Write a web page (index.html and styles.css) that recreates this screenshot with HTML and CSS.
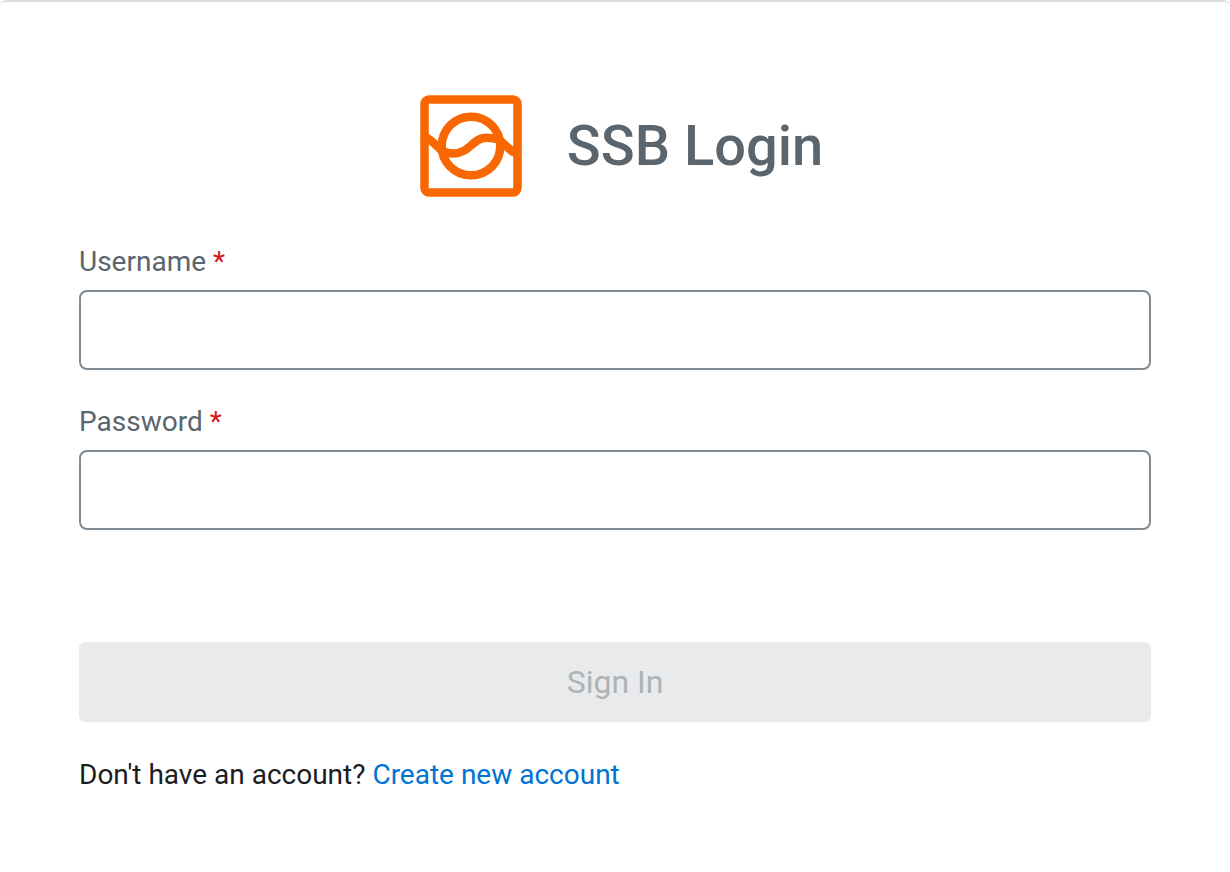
FILE: index.html
```html
<!DOCTYPE html>
<html lang="en">
<head>
  <meta charset="UTF-8">
  <meta name="viewport" content="width=device-width, initial-scale=1.0">
  <title>SSB Login</title>
  <link rel="stylesheet" href="styles.css">
</head>
<body>
  <main class="login-card">
    <header class="login-header">
      <svg class="logo" viewBox="0 0 102 102" fill="none" stroke="#f96702" stroke-width="8.5" aria-hidden="true">
        <rect x="4.5" y="4.5" width="93" height="93" rx="4.5"/>
        <circle cx="51" cy="51" r="29.3"/>
        <path d="M6 42.5C11 44 17 52 23 56.5C34 61 43 58 51 50.5C60 42 66 41 79 44.5L91 55.5Q93 57 96 58"/>
      </svg>
      <h1 class="title">SSB Login</h1>
    </header>

    <form class="login-form">
      <label class="field-label" for="username">Username <span class="required">*</span></label>
      <input class="field-input" type="text" id="username" name="username" required>

      <label class="field-label" for="password">Password <span class="required">*</span></label>
      <input class="field-input" type="password" id="password" name="password" required>

      <button class="submit" type="submit" disabled>Sign In</button>
    </form>

    <p class="signup">Don't have an account? <a href="#register">Create new account</a></p>
  </main>
</body>
</html>
```

FILE: styles.css
```css
* {
  box-sizing: border-box;
}
body {
  margin: 0;
  background: #fff;
  color: #1b1d1f;
  font-family: Roboto, "Liberation Sans", sans-serif;
  font-size: 28px;
  line-height: 40px;
}
.login-card {
  min-height: 100vh;
  padding: 93px 79px 76px;
  border-top: 2px solid #dedede;
  border-radius: 6px;
}

.login-header {
  display: flex;
  align-items: center;
  justify-content: center;
  gap: 45px;
  padding-left: 13px;
  margin-bottom: 45px;
}
.logo {
  width: 102px;
  height: 102px;
}
.title {
  margin: 0;
  color: #5a656d;
  font-size: 56px;
  font-weight: 500;
  line-height: 64px;
}

.login-form {
  display: flex;
  flex-direction: column;
}
.field-label {
  margin-bottom: 8px;
  color: #5a656d;
}
.required {
  color: #d3191c;
}
.field-input {
  height: 80px;
  margin: 0 0 32px;
  padding: 0 24px;
  border: 2px solid #808b94;
  border-radius: 8px;
  background: #fff;
  color: inherit;
  font: inherit;
}
.submit {
  height: 80px;
  margin-top: 80px;
  border: 0;
  border-radius: 6px;
  background: #e9eaeb;
  color: #adb3b7;
  font-family: inherit;
  font-size: 32px;
}

.signup {
  margin: 33px 0 0;
}
.signup a {
  color: #0074d2;
  text-decoration: none;
}
```
